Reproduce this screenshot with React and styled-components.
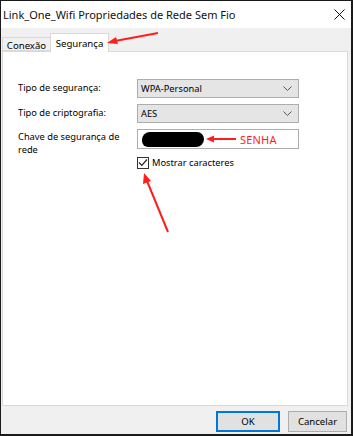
import React from 'react';
import styled, { createGlobalStyle } from 'styled-components';

const GlobalStyle = createGlobalStyle`
  html, body {
    margin: 0;
    padding: 0;
    background: #ffffff;
  }
  * {
    box-sizing: border-box;
  }
`;

const Window = styled.div`
  position: relative;
  width: 353px;
  height: 436px;
  display: flex;
  flex-direction: column;
  background: #f0f0f0;
  border: 1px solid #1a1a1a;
  border-right-width: 2px;
  border-bottom-width: 2px;
  font-family: "Noto Sans", "Open Sans", sans-serif;
  font-size: 9.3px;
  color: #000;
  overflow: hidden;
`;

const TitleBar = styled.div`
  height: 27px;
  flex: none;
  display: flex;
  align-items: center;
  justify-content: space-between;
  padding: 0 5px 0 2px;
  background: #ffffff;
  font-size: 11px;
  color: #111;
`;

const CloseButton = styled.span`
  display: flex;
  align-items: center;
  justify-content: center;
  width: 14px;
  height: 14px;
`;

const TabStrip = styled.div`
  height: 23px;
  flex: none;
  display: flex;
  align-items: flex-end;
  padding-left: 1px;
  position: relative;
  z-index: 1;
`;

const Tab = styled.div`
  display: flex;
  align-items: center;
  justify-content: center;
  width: ${(p) => (p.$active ? '59px' : '49px')};
  height: ${(p) => (p.$active ? '19px' : '14px')};
  margin-bottom: ${(p) => (p.$active ? '-1px' : '0')};
  margin-left: ${(p) => (p.$active ? '-1px' : '0')};
  padding-top: ${(p) => (p.$active ? '0' : '2px')};
  background: ${(p) => (p.$active ? '#ffffff' : '#f0f0f0')};
  border: 1px solid #d9d9d9;
  border-bottom: ${(p) => (p.$active ? 'none' : '1px solid #d9d9d9')};
  font-size: 9.6px;
`;

const Panel = styled.div`
  height: 355px;
  flex: none;
  margin: 0 3px 0 1px;
  background: #ffffff;
  border: 1px solid #d9d9d9;
  padding: 27px 0 0 15px;
`;

const Form = styled.div`
  display: grid;
  grid-template-columns: 119px 162px;
  grid-template-rows: 19px 19px 20px auto;
  row-gap: 6px;
  align-items: center;
`;

const Label = styled.div`
  line-height: 12.5px;
  align-self: ${(p) => (p.$top ? 'start' : 'center')};
  padding-top: ${(p) => (p.$top ? '2px' : '0')};
  white-space: nowrap;
`;

const Select = styled.div`
  height: 19px;
  display: flex;
  align-items: center;
  justify-content: space-between;
  padding: 0 6px 0 3px;
  background: #e5e5e5;
  border: 1px solid #adadad;
`;

const KeyField = styled.div`
  height: 20px;
  display: flex;
  align-items: center;
  padding-left: 4px;
  background: #ffffff;
  border: 1px solid #adadad;
`;

const Blob = styled.span`
  flex: none;
  width: 62px;
  height: 15px;
  background: #000;
  border-radius: 8px 7px 8px 6px;
`;

const Senha = styled.span`
  color: #ff1e1e;
  font-size: 11px;
  letter-spacing: 0.2px;
  margin-left: 3px;
`;

const CheckRow = styled.label`
  grid-column: 2 / 3;
  display: flex;
  align-items: center;
  gap: 3px;
  margin-top: 1px;
`;

const CheckBox = styled.span`
  width: 12px;
  height: 12px;
  display: flex;
  align-items: center;
  justify-content: center;
  border: 1px solid #333;
  background: #fff;
`;

const Footer = styled.div`
  flex: 1;
  display: flex;
  align-items: center;
  justify-content: flex-end;
  gap: 8px;
  padding: 3px 4px 0 0;
`;

const Button = styled.button`
  width: ${(p) => (p.$wide ? '59px' : '64px')};
  height: 21px;
  padding: 0;
  font-family: inherit;
  font-size: 9.6px;
  color: #000;
  background: #e1e1e1;
  border: ${(p) => (p.$primary ? '2px solid #0078d7' : '1px solid #adadad')};
`;

const Overlay = styled.svg`
  position: absolute;
  left: 0;
  top: 0;
  pointer-events: none;
  z-index: 5;
`;

const Chevron = () => (
  <svg width="9" height="6" viewBox="0 0 9 6">
    <path d="M0.5 0.5 L4.5 4.5 L8.5 0.5" fill="none" stroke="#555" strokeWidth="1" />
  </svg>
);

export default function App() {
  return (
    <>
      <GlobalStyle />
      <Window>
        <TitleBar>
          <span>Link_One_Wifi Propriedades de Rede Sem Fio</span>
          <CloseButton>
            <svg width="11" height="11" viewBox="0 0 11 11">
              <path d="M0.5 0.5 L10.5 10.5 M10.5 0.5 L0.5 10.5" stroke="#111" strokeWidth="1" />
            </svg>
          </CloseButton>
        </TitleBar>
        <TabStrip>
          <Tab>Conexão</Tab>
          <Tab $active>Segurança</Tab>
        </TabStrip>
        <Panel>
          <Form>
            <Label>Tipo de segurança:</Label>
            <Select>
              <span>WPA-Personal</span>
              <Chevron />
            </Select>
            <Label>Tipo de criptografia:</Label>
            <Select>
              <span>AES</span>
              <Chevron />
            </Select>
            <Label $top>Chave de segurança de<br />rede</Label>
            <KeyField>
              <Blob />
              <svg width="33" height="8" viewBox="0 0 33 8">
                <path d="M9 4 L32 4" stroke="#ff1e1e" strokeWidth="2" />
                <path d="M2 4 L10 0.5 L10 7.5 Z" fill="#ff1e1e" />
              </svg>
              <Senha>SENHA</Senha>
            </KeyField>
            <CheckRow>
              <CheckBox>
                <svg width="10" height="9" viewBox="0 0 10 9">
                  <path d="M1 4.5 L3.8 7.3 L9 1.5" fill="none" stroke="#222" strokeWidth="1.2" />
                </svg>
              </CheckBox>
              <span>Mostrar caracteres</span>
            </CheckRow>
          </Form>
        </Panel>
        <Footer>
          <Button $primary>OK</Button>
          <Button $wide>Cancelar</Button>
        </Footer>
        <Overlay width="353" height="436" viewBox="0 0 353 436">
          <path d="M157 32 L114 40" stroke="#ff1e1e" strokeWidth="2" />
          <path d="M106 42 L115 36 L117 43 Z" fill="#ff1e1e" />
          <path d="M167 231 L146 180" stroke="#ff1e1e" strokeWidth="2" />
          <path d="M143 172 L142 183 L150 180 Z" fill="#ff1e1e" />
        </Overlay>
      </Window>
    </>
  );
}
